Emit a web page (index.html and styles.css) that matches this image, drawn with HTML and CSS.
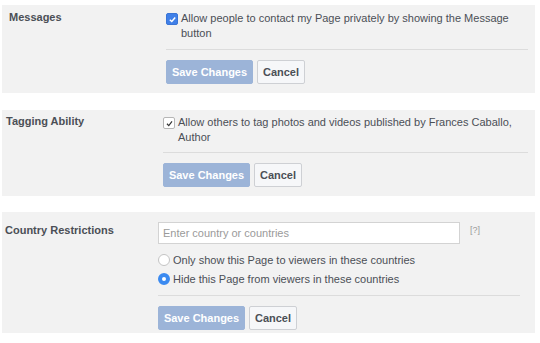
FILE: index.html
```html
<!DOCTYPE html>
<html lang="en">
  <head>
    <meta charset="UTF-8" />
    <meta name="viewport" content="width=device-width, initial-scale=1.0" />
    <title>Page Settings</title>
    <link rel="stylesheet" href="styles.css">
  </head>
  <body>
    <!-- Messages -->
    <div class="setting setting-messages">
      <div class="label">Messages</div>
      <div class="body">
        <label class="option">
          <span class="check checked">
            <svg viewBox="0 0 10 10" width="9" height="9"><path d="M2 5.2 L4.2 7.3 L8 2.8" fill="none" stroke="#fff" stroke-width="1.6" /></svg>
          </span>
          <span>Allow people to contact my Page privately by showing the Message button</span>
        </label>
        <div class="actions">
          <button class="save-btn">Save Changes</button>
          <button class="cancel-btn">Cancel</button>
        </div>
      </div>
    </div>

    <!-- Tagging Ability -->
    <div class="setting setting-tagging">
      <div class="label">Tagging Ability</div>
      <div class="body">
        <label class="option">
          <span class="check">
            <svg viewBox="0 0 10 10" width="9" height="9"><path d="M2.2 5.3 L4.2 7.4 L7.8 2.6" fill="none" stroke="#333" stroke-width="1.3" /></svg>
          </span>
          <span>Allow others to tag photos and videos published by Frances Caballo, Author</span>
        </label>
        <div class="actions">
          <button class="save-btn">Save Changes</button>
          <button class="cancel-btn">Cancel</button>
        </div>
      </div>
    </div>

    <!-- Country Restrictions -->
    <div class="setting setting-country">
      <div class="label">Country Restrictions</div>
      <div class="body">
        <div class="country-row">
          <input type="text" class="country-input" placeholder="Enter country or countries" />
          <span class="help">[?]</span>
        </div>
        <label class="radio-option">
          <span class="radio"></span>
          <span>Only show this Page to viewers in these countries</span>
        </label>
        <label class="radio-option">
          <span class="radio selected"></span>
          <span>Hide this Page from viewers in these countries</span>
        </label>
        <div class="actions">
          <button class="save-btn">Save Changes</button>
          <button class="cancel-btn">Cancel</button>
        </div>
      </div>
    </div>
  </body>
</html>
```

FILE: styles.css
```css
body {
  margin: 0;
  padding-top: 5px;
  background-color: #fff;
  font-family: "Liberation Sans", Arial, sans-serif;
  font-size: 11px;
  color: #4b4f56;
}
.setting {
  display: flex;
  margin: 0 5px 0 2px;
  background-color: #f2f2f2;
}
.setting-messages {
  padding: 6px 7px 9px 7px;
  margin-bottom: 17px;
}
.setting-tagging {
  padding: 5px 7px 9px 4px;
  margin-bottom: 16px;
}
.setting-country {
  padding: 10px 15px 3px 3px;
}
.label {
  font-weight: bold;
  color: #4b4f56;
  font-size: 11px;
}
.setting-messages .label {
  width: 157px;
}
.setting-tagging .label {
  width: 157px;
}
.setting-country .label {
  width: 153px;
  padding-top: 2px;
}
.body {
  flex: 1;
}
.option {
  display: flex;
  align-items: flex-start;
  gap: 3px;
  line-height: 15px;
  padding-bottom: 8px;
  border-bottom: 1px solid #dcdcdc;
  color: #4b4f56;
}
.setting-tagging .option {
  padding-bottom: 7px;
}
.check {
  flex: none;
  display: flex;
  align-items: center;
  justify-content: center;
  width: 10px;
  height: 10px;
  margin-top: 2px;
  border: 1px solid #b6b6b6;
  border-radius: 2px;
  background-color: #fff;
}
.check.checked {
  background-color: #4080e8;
  border-color: #3a75d6;
}
.actions {
  display: flex;
  gap: 4px;
  padding-top: 10px;
}
button {
  font-family: "Liberation Sans", Arial, sans-serif;
  font-size: 11px;
  font-weight: bold;
  height: 24px;
  padding: 0;
  white-space: nowrap;
  border-radius: 2px;
  cursor: pointer;
}
.save-btn {
  width: 87px;
  background-color: #9cb4d8;
  border: 1px solid #9cb4d8;
  color: #fff;
}
.cancel-btn {
  width: 48px;
  background-color: #f6f7f9;
  border: 1px solid #ced0d4;
  color: #4b4f56;
}
.country-row {
  display: flex;
  align-items: flex-start;
  gap: 10px;
  margin-bottom: 6px;
}
.country-input {
  width: 302px;
  height: 22px;
  box-sizing: border-box;
  border: 1px solid #d3d3d3;
  padding: 0 4px;
  font-family: "Liberation Sans", Arial, sans-serif;
  font-size: 11px;
  color: #4b4f56;
}
.country-input::placeholder {
  color: #9a9a9a;
}
.help {
  font-size: 9px;
  color: #9a9a9a;
  padding-top: 3px;
}
.radio-option {
  display: flex;
  align-items: center;
  gap: 3px;
  height: 19px;
  color: #4b4f56;
}
.radio-option:last-of-type {
  padding-bottom: 7px;
  border-bottom: 1px solid #dcdcdc;
}
.radio {
  width: 10px;
  height: 10px;
  border: 1px solid #c4c4c4;
  border-radius: 50%;
  background-color: #fff;
}
.radio.selected {
  width: 4px;
  height: 4px;
  border: 4px solid #3b8af0;
  background-color: #fff;
}
```
